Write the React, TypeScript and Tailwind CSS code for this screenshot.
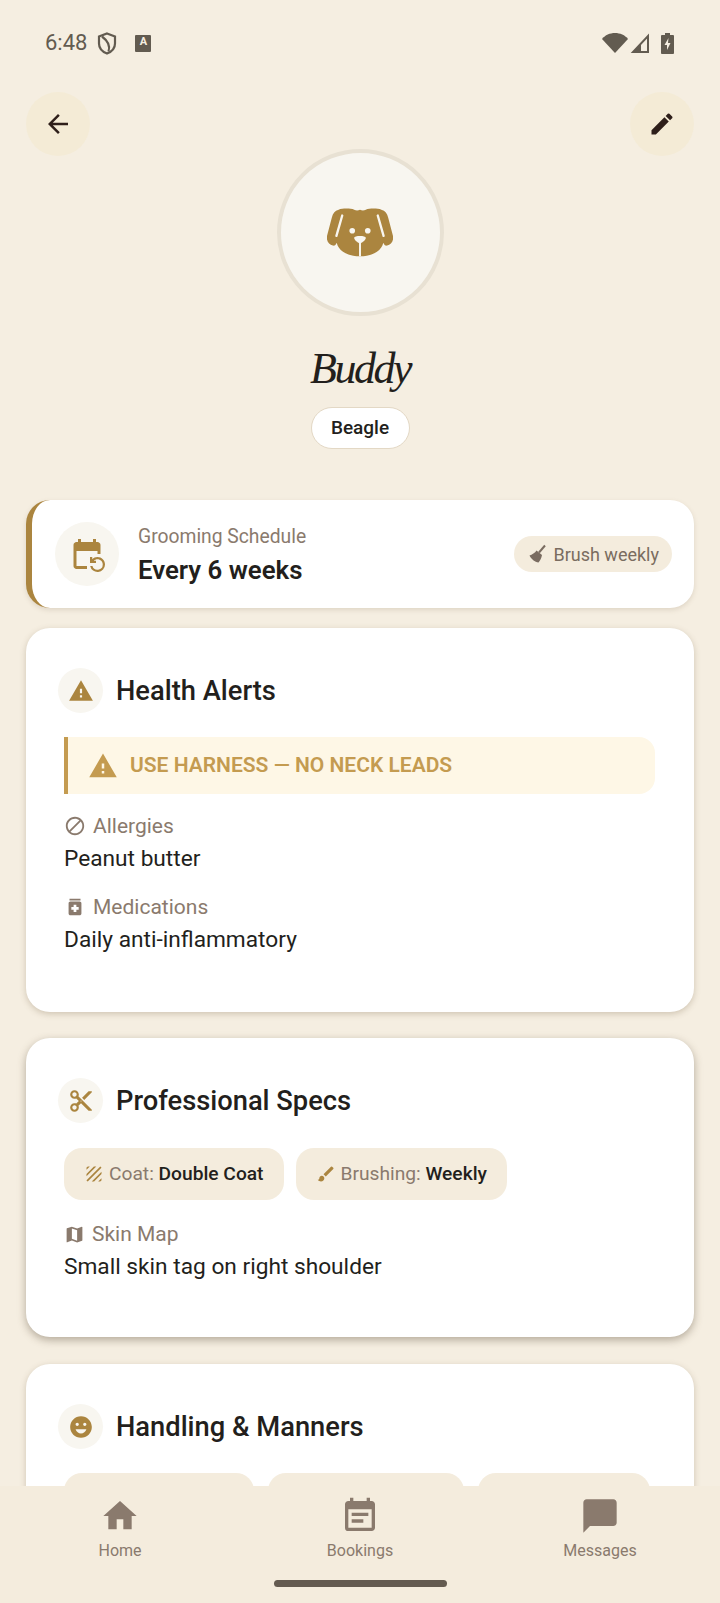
import React from "react";
import {
  MdArrowBack, MdEdit, MdWarning, MdBlock, MdMedication, MdContentCut, MdMap, MdTexture, MdBrush,
  MdEventRepeat, MdEmojiEmotions, MdHome, MdEventNote, MdChatBubble,
} from "react-icons/md";

function Dog() {
  return (
    <svg width="66" height="66" viewBox="0 0 68 66">
      <path fill="#ab853f" d="M12 9C16 7.500 24 7.500 28 9C30 10 32 10 34 9C36 10 38 10 40 9C44 7.500 52 7.500 56 9C60 10 62 13 63 17L68 36C69 41 66 45 62 46C60 46.500 59 45 58 43C56 52 46 57 34 57C22 57 12 52 10 43C9 45 8 46.500 6 46C2 45 -1 41 0 36L5 17C6 13 8 10 12 9Z" />
      <path fill="none" stroke="#f8f6f0" strokeWidth="2.400" strokeLinecap="round" d="M15.700 15L9.700 36M52.300 15L58.300 36" />
      <circle cx="26" cy="30.700" r="2.900" fill="#f8f6f0" />
      <circle cx="42" cy="30.700" r="2.900" fill="#f8f6f0" />
      <path fill="#f8f6f0" d="M28 38C28 35.500 40 35.500 40 38C40 40.500 36 43 35 43.500L35 57L33 57L33 43.500C32 43 28 40.500 28 38Z" />
    </svg>
  );
}

function Broom() {
  return (
    <svg width="20" height="20" viewBox="0 0 20 20" fill="#7a6c60">
      <path d="M18 1.500L12 8.500" fill="none" stroke="#7a6c60" strokeWidth="2" />
      <path d="M9.500 6.500L15 11C14.500 14 13 17 11.500 18.500C8 18 4 15 2.500 11.500C5 10.500 8 9 9.500 6.500Z" />
    </svg>
  );
}

function Header({ icon, title }: { icon: React.ReactNode; title: string }) {
  return (
    <div className="flex items-center gap-[13px] ml-[6px]">
      <div className="w-[45px] h-[45px] rounded-full bg-[#f8f6f0] flex items-center justify-center text-[#ab853f]">{icon}</div>
      <h2 className="text-[27.3px] leading-[32px] font-medium text-[#231f1c]">{title}</h2>
    </div>
  );
}

function Field({ icon, label, value }: { icon: React.ReactNode; label: string; value: string }) {
  return (
    <div className="flex flex-col">
      <div className="flex items-center gap-[7px] text-[#8a7a6d] text-[21px] leading-[28px]">
        {icon}
        <span>{label}</span>
      </div>
      <div className="text-[22.7px] leading-[32px] text-[#231f1c] mt-[3px]">{value}</div>
    </div>
  );
}

function Chip({ icon, label, value }: { icon: React.ReactNode; label: string; value: string }) {
  return (
    <div className="h-[52px] rounded-[18px] bg-[#f4ecdd] px-[20px] flex items-center gap-[5px] text-[19.2px]">
      {icon}
      <span className="text-[#8a7a6d]">{label} <span className="font-medium text-[#231f1c]">{value}</span></span>
    </div>
  );
}

function NavItem({ icon, label }: { icon: React.ReactNode; label: string }) {
  return (
    <div className="flex-1 flex flex-col items-center text-[#8a7a6d]">
      <div className="h-[44px] flex items-center justify-center">{icon}</div>
      <span className="text-[16px] leading-[24px] mt-[1px]">{label}</span>
    </div>
  );
}

export default function App() {
  return (
    <div className="w-[720px] h-[1603px] overflow-hidden flex flex-col bg-[#f5eee1] font-['Roboto',sans-serif]">
      <div className="flex-1 min-h-0 overflow-hidden flex flex-col">
        <div className="h-[84px] shrink-0 px-[45px] pt-[29px] flex items-start justify-between text-[#625b50]">
          <div className="flex items-center h-[28px]">
            <span className="text-[22px] leading-[28px]">6:48</span>
            <svg className="ml-[10px]" width="20" height="25" viewBox="0 0 20 24" fill="none" stroke="#625b50" strokeWidth="2.200">
              <path d="M10 2L18 5V12C18 17 14 20.500 10 22C6 20.500 2 17 2 12V5Z" />
              <path d="M5 5C9 8 14 13 11.500 20" />
            </svg>
            <div className="ml-[18px] w-[16px] h-[17px] bg-[#625b50] rounded-[1px] text-[#f5eee1] text-[11px] leading-[14px] font-bold text-center">A</div>
          </div>
          <div className="flex items-center h-[28px] mr-[1px]">
            <svg width="26" height="20" viewBox="0 0 26 20"><path fill="#625b50" d="M0 6C3 2 8 0 13 0C18 0 23 2 26 6L13 20Z" /></svg>
            <svg className="ml-[2px]" width="20" height="20" viewBox="0 0 20 20"><path fill="none" stroke="#625b50" strokeWidth="2" d="M18 3V19H3Z" /><path fill="#625b50" d="M11 11V19H3Z" /></svg>
            <svg className="ml-[11px]" width="13" height="21" viewBox="0 0 13 21"><path fill="#625b50" d="M4 0H9V2H12C12.500 2 13 2.500 13 3V20C13 20.500 12.500 21 12 21H1C.5 21 0 20.500 0 20V3C0 2.500.5 2 1 2H4Z" /><path fill="#f5eee1" d="M7.500 5L3.500 12H6V17L9.500 10H7Z" /></svg>
          </div>
        </div>

        <div className="h-[64px] shrink-0 mt-[8px] px-[26px] flex justify-between">
          <div className="w-[64px] h-[64px] rounded-full bg-[#f4ebd6] flex items-center justify-center text-[#2e1f1a]"><MdArrowBack size={30} /></div>
          <div className="w-[64px] h-[64px] rounded-full bg-[#f4ebd6] flex items-center justify-center text-[#2e1f1a]"><MdEdit size={28} /></div>
        </div>

        <div className="flex flex-col items-center shrink-0 mt-[-7px]">
          <div className="w-[167px] h-[167px] rounded-full bg-[#f8f6f0] border-[4px] border-[#e8e1d3] flex items-center justify-center">
            <Dog />
          </div>
          <h1 className="mt-[25px] text-[44px] leading-[56px] italic text-[#231f1c] font-['Liberation_Serif',serif] tracking-[-2.5px] font-normal">Buddy</h1>
          <div className="mt-[10px] h-[42px] w-[99px] rounded-full bg-white border border-[#e3d8c5] flex items-center justify-center text-[19px] font-medium text-[#231f1c]">Beagle</div>
        </div>

        <div className="mt-[51px] mx-[26px] flex flex-col shrink-0">
          <div className="h-[108px] rounded-[24px] bg-white border-l-[6px] border-[#ab853f] shadow-[0_2px_5px_rgba(120,100,70,0.18)] flex items-center pl-[23px] pr-[22px]">
            <div className="w-[64px] h-[64px] rounded-full bg-[#f8f6f0] flex items-center justify-center text-[#ab853f]"><MdEventRepeat size={36} /></div>
            <div className="ml-[19px] flex-1 pt-[2px]">
              <div className="text-[19.3px] leading-[26px] text-[#8a7a6d]">Grooming Schedule</div>
              <div className="text-[25.800px] leading-[32px] font-semibold text-[#231f1c] mt-[4px]">Every 6 weeks</div>
            </div>
            <div className="h-[36px] rounded-full bg-[#f4ecdd] px-[13px] flex items-center gap-[6px] text-[18px] text-[#7a6c60]">
              <Broom />
              <span>Brush weekly</span>
            </div>
          </div>

          <div className="mt-[20px] h-[384px] rounded-[24px] bg-white shadow-[0_2px_6px_rgba(120,100,70,0.3)] pt-[40px] pl-[26px] pr-[39px] flex flex-col">
            <Header icon={<MdWarning size={26} />} title="Health Alerts" />
            <div className="mt-[24px] ml-[12px] h-[57px] border-l-[4px] border-[#c49b50] bg-[#fef7e6] rounded-r-[16px] flex items-center pl-[20px] text-[#c49b50]">
              <MdWarning size={30} />
              <span className="ml-[12px] text-[21px] font-semibold">USE HARNESS — NO NECK LEADS</span>
            </div>
            <div className="ml-[12px] mt-[18px] flex flex-col gap-[18px]">
              <Field icon={<MdBlock size={22} />} label="Allergies" value="Peanut butter" />
              <Field icon={<MdMedication size={22} />} label="Medications" value="Daily anti-inflammatory" />
            </div>
          </div>

          <div className="mt-[26px] h-[299px] rounded-[24px] bg-white shadow-[0_3px_8px_rgba(80,65,45,0.4)] pt-[40px] px-[26px] flex flex-col">
            <Header icon={<MdContentCut size={26} />} title="Professional Specs" />
            <div className="mt-[25px] ml-[12px] flex gap-[12px]">
              <Chip icon={<MdTexture size={20} className="text-[#ab853f]" />} label="Coat:" value="Double Coat" />
              <Chip icon={<MdBrush size={20} className="text-[#ab853f]" />} label="Brushing:" value="Weekly" />
            </div>
            <div className="ml-[12px] mt-[20px]">
              <Field icon={<MdMap size={21} />} label="Skin Map" value="Small skin tag on right shoulder" />
            </div>
          </div>

          <div className="mt-[27px] h-[400px] rounded-[24px] bg-white shadow-[0_2px_6px_rgba(120,100,70,0.3)] pt-[40px] px-[26px] flex flex-col">
            <Header icon={<MdEmojiEmotions size={26} />} title="Handling & Manners" />
            <div className="mt-[24px] ml-[12px] flex gap-[14px]">
              <div className="w-[190px] h-[52px] rounded-[18px] bg-[#f4ecdd]" />
              <div className="w-[196px] h-[52px] rounded-[18px] bg-[#f4ecdd]" />
              <div className="w-[172px] h-[52px] rounded-[18px] bg-[#f4ecdd]" />
            </div>
          </div>
        </div>
      </div>

      <div className="h-[117px] shrink-0 bg-[#f4ecdd] flex flex-col relative z-10">
        <div className="flex pt-[8px]">
          <NavItem icon={<MdHome size={40} />} label="Home" />
          <NavItem icon={<MdEventNote size={40} />} label="Bookings" />
          <NavItem icon={<MdChatBubble size={40} />} label="Messages" />
        </div>
        <div className="mt-[17px] mx-auto w-[173px] h-[7px] rounded-full bg-[#645b50]" />
      </div>
    </div>
  );
}
